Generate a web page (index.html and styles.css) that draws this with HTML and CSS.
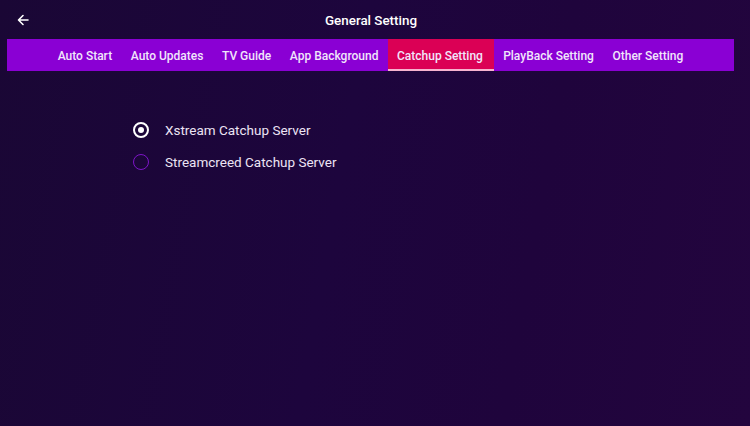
FILE: index.html
```html
<!DOCTYPE html>
<html>
<head>
<meta charset="utf-8">
<link rel="stylesheet" href="styles.css">
</head>
<body>
<div class="screen">
  <header class="topbar">
    <span class="back">
      <svg width="12" height="12" viewBox="0 0 12 12"><path d="M11 6H1.8M6 1.5L1.5 6L6 10.5" fill="none" stroke="#fff" stroke-width="1.6" stroke-linecap="round" stroke-linejoin="round"/></svg>
    </span>
    <h1 class="title">General Setting</h1>
  </header>
  <nav class="tabs">
    <span class="tab">Auto Start</span>
    <span class="tab">Auto Updates</span>
    <span class="tab">TV Guide</span>
    <span class="tab">App Background</span>
    <span class="tab active">Catchup Setting</span>
    <span class="tab">PlayBack Setting</span>
    <span class="tab">Other Setting</span>
  </nav>
  <div class="options">
    <label class="option"><span class="radio checked"></span><span class="label">Xstream Catchup Server</span></label>
    <label class="option"><span class="radio"></span><span class="label">Streamcreed Catchup Server</span></label>
  </div>
</div>
</body>
</html>
```
FILE: styles.css
```css
html, body {
  margin: 0;
  padding: 0;
}
body {
  width: 750px;
  height: 426px;
  overflow: hidden;
  font-family: Roboto, "Noto Sans", sans-serif;
  color: #fff;
}
.screen {
  width: 750px;
  height: 426px;
  background: linear-gradient(100deg, #1a0735 0%, #1d053d 45%, #1f043c 70%, #23053e 100%);
  display: flex;
  flex-direction: column;
}
.topbar {
  height: 39px;
  position: relative;
  display: flex;
  align-items: center;
  justify-content: center;
}
.back {
  position: absolute;
  left: 17px;
  top: 14px;
  width: 12px;
  height: 12px;
  display: flex;
}
.title {
  margin: 0;
  font-size: 13.4px;
  font-weight: 500;
  margin-left: -8px;
  margin-top: 1px;
}
.tabs {
  margin: 0 16px 0 7px;
  height: 32px;
  background: #8a00d4;
  display: flex;
  justify-content: center;
  align-items: stretch;
}
.tab {
  display: flex;
  align-items: center;
  padding: 2px 9.3px 0;
  font-size: 12px;
  font-weight: 500;
  color: #f1e6fb;
  box-sizing: border-box;
}
.tab.active {
  background: #db0055;
  border-bottom: 2px solid #f7b3cf;
  padding: 4px 11px 0 9.3px;
}
.options {
  padding: 43px 0 0 133px;
  display: flex;
  flex-direction: column;
}
.option {
  height: 32px;
  display: flex;
  align-items: center;
}
.radio {
  width: 16px;
  height: 16px;
  box-sizing: border-box;
  border-radius: 50%;
  border: 1.8px solid #7d14c8;
  margin-right: 16px;
  position: relative;
}
.radio.checked {
  border: 2.2px solid #ffffff;
}
.radio.checked::after {
  content: "";
  position: absolute;
  left: 2.6px;
  top: 2.6px;
  width: 6.4px;
  height: 6.4px;
  border-radius: 50%;
  background: #fff;
}
.label {
  font-size: 13.5px;
  color: #ece4f4;
}
```
